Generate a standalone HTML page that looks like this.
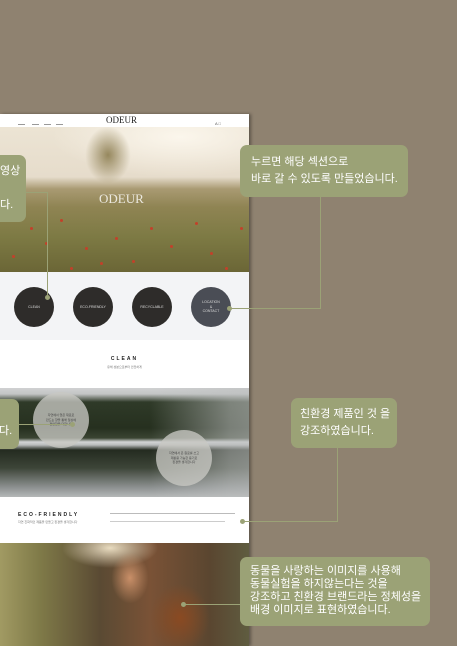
<!DOCTYPE html>
<html><head><meta charset="utf-8"><style>
*{margin:0;padding:0;box-sizing:border-box}
body{width:457px;height:646px;background:#8f8270;position:relative;overflow:hidden;font-family:"Liberation Sans","Noto Sans CJK KR",sans-serif}
.abs{position:absolute}
.mock{left:0;top:114px;width:249px;height:532px;background:#fff;box-shadow:2px 0 3px rgba(0,0,0,.35)}
.hdr{left:0;top:114px;width:249px;height:13px;background:#fff}
.nav{top:124px;height:1px;width:7px;background:#999}
.hero{left:0;top:127px;width:249px;height:145px;background:
radial-gradient(ellipse 24px 30px at 108px 28px,rgba(140,125,80,.9),rgba(140,125,80,0) 95%),
radial-gradient(ellipse 160px 50px at 180px 10px,#fbf6ec,rgba(250,245,235,0) 80%),
linear-gradient(#ece4d4 0,#e6dccb 50px,#a99a72 62px,#8f8453 80px,#7d7a44 110px,#6b6636 145px)}
.dot{width:3px;height:3px;border-radius:50%;background:#c2412a;position:absolute}
.circ{top:287px;width:40px;height:40px;border-radius:50%;background:#2e2c2a;color:#ddd;font-size:3.5px;text-align:center;display:flex;align-items:center;justify-content:center;line-height:1.3}
.lake{left:0;top:388px;width:249px;height:109px;background:
linear-gradient(90deg,rgba(0,0,0,0) 0,rgba(0,0,0,0) 150px,rgba(190,192,192,.55) 230px,rgba(190,192,192,.6) 249px),
linear-gradient(#d0d1d2 0,#c3c5c5 6px,#2f3a28 14px,#26301f 40px,#3a4432 50px,#d2d4d5 54px,#b9bcbc 57px,#242b20 62px,#3d4538 80px,#8f9393 100px,#b5b8b8 109px)}
.lc{width:56px;height:56px;border-radius:50%;background:rgba(200,200,195,.78);font-size:3px;color:#444;display:flex;align-items:center;justify-content:center;text-align:center;line-height:1.5}
.photo{left:0;top:543px;width:249px;height:103px;background:
radial-gradient(ellipse 22px 30px at 130px 35px,#c98f68,rgba(200,140,90,0) 85%),
radial-gradient(ellipse 35px 40px at 180px 75px,#8a4a22,rgba(120,60,30,0) 85%),
radial-gradient(ellipse 60px 25px at 110px 5px,#e9dcc0,rgba(240,230,210,0) 80%),
linear-gradient(90deg,#a19a63 0,#7f7a48 40px,#5a4a33 100px,#7a5236 150px,#5a4630 210px,#5f5c40 249px)}
.bub{background:#9ba276;color:#fff;border-radius:7px;font-size:11px;line-height:17px}
.ln{background:#9ba276}
.pt{width:5px;height:5px;border-radius:50%;background:#9ba276}
</style></head><body>
<div class="abs mock"></div>
<div class="abs hdr"></div>
<div class="abs nav" style="left:18px"></div><div class="abs nav" style="left:32px"></div><div class="abs nav" style="left:44px"></div><div class="abs nav" style="left:56px"></div>
<div class="abs" style="left:106px;top:115px;font-family:'Liberation Serif',serif;font-size:9px;color:#222">ODEUR</div>
<div class="abs" style="left:215px;top:121px;font-size:4px;color:#555">A &#9633;</div>
<div class="abs hero">
<div class="dot" style="left:30px;top:100px"></div><div class="dot" style="left:70px;top:140px"></div><div class="dot" style="left:132px;top:133px"></div><div class="dot" style="left:170px;top:118px"></div><div class="dot" style="left:210px;top:125px"></div><div class="dot" style="left:240px;top:100px"></div><div class="dot" style="left:85px;top:120px"></div><div class="dot" style="left:12px;top:128px"></div><div class="dot" style="left:195px;top:95px"></div><div class="dot" style="left:60px;top:92px"></div><div class="dot" style="left:150px;top:100px"></div><div class="dot" style="left:100px;top:135px"></div><div class="dot" style="left:45px;top:115px"></div><div class="dot" style="left:225px;top:140px"></div><div class="dot" style="left:115px;top:110px"></div>
</div>
<div class="abs" style="left:99px;top:191px;font-family:'Liberation Serif',serif;font-size:13px;color:rgba(255,255,255,.8)">ODEUR</div>
<div class="abs" style="left:0;top:272px;width:249px;height:68px;background:#f3f4f6"></div>
<div class="abs circ" style="left:14px">CLEAN</div>
<div class="abs circ" style="left:73px">ECO-FRIENDLY</div>
<div class="abs circ" style="left:132px">RECYCLABLE</div>
<div class="abs circ" style="left:191px;background:#4a4d55">LOCATION<br>&amp;<br>CONTACT</div>
<div class="abs" style="left:0;top:356px;width:249px;text-align:center;font-size:5px;font-weight:bold;letter-spacing:2px;color:#222">CLEAN</div>
<div class="abs" style="left:0;top:365px;width:249px;text-align:center;font-size:3px;color:#777">유해 성분으로부터 안전하게</div>
<div class="abs lake"></div>
<div class="abs lc" style="left:33px;top:392px">자연에서 얻은 재료로<br>만드는 향을 통해 일상에<br>편안함을 더합니다</div>
<div class="abs lc" style="left:156px;top:430px">자연에서 온 원료를 쓰고<br>재활용 가능한 용기로<br>환경을 생각합니다</div>
<div class="abs" style="left:18px;top:512px;font-size:5px;font-weight:bold;letter-spacing:2px;color:#222">ECO-FRIENDLY</div>
<div class="abs" style="left:18px;top:520px;font-size:3px;color:#777">자연 친화적인 제품을 만들고 환경을 생각합니다</div>
<div class="abs" style="left:110px;top:513px;width:125px;height:1px;background:#bbb"></div>
<div class="abs" style="left:110px;top:521px;width:115px;height:1px;background:#ccc"></div>
<div class="abs photo"></div>
<div class="abs bub" style="left:-10px;top:155px;width:36px;height:67px;padding:8px 0 0 10px">영상<br><br>다.</div>
<div class="abs ln" style="left:26px;top:192px;width:22px;height:1px"></div>
<div class="abs ln" style="left:47px;top:192px;width:1px;height:105px"></div>
<div class="abs pt" style="left:45px;top:295px"></div>
<div class="abs bub" style="left:240px;top:145px;width:168px;height:52px;padding:9px 0 0 11px">누르면 해당 섹션으로<br>바로 갈 수 있도록 만들었습니다.</div>
<div class="abs ln" style="left:320px;top:197px;width:1px;height:112px"></div>
<div class="abs ln" style="left:230px;top:308px;width:91px;height:1px"></div>
<div class="abs pt" style="left:227px;top:306px"></div>
<div class="abs bub" style="left:291px;top:398px;width:106px;height:50px;padding:8px 0 0 9px">친환경 제품인 것 을<br>강조하였습니다.</div>
<div class="abs ln" style="left:337px;top:448px;width:1px;height:74px"></div>
<div class="abs ln" style="left:242px;top:521px;width:96px;height:1px"></div>
<div class="abs pt" style="left:240px;top:519px"></div>
<div class="abs bub" style="left:-10px;top:399px;width:29px;height:50px;padding:24px 0 0 9px">다.</div>
<div class="abs ln" style="left:19px;top:424px;width:53px;height:1px"></div>
<div class="abs pt" style="left:70px;top:422px"></div>
<div class="abs bub" style="left:240px;top:557px;width:190px;height:69px;padding:8px 0 0 10px;line-height:13px">동물을 사랑하는 이미지를 사용해<br>동물실험을 하지않는다는 것을<br>강조하고 친환경 브랜드라는 정체성을<br>배경 이미지로 표현하였습니다.</div>
<div class="abs ln" style="left:184px;top:604px;width:56px;height:1px"></div>
<div class="abs pt" style="left:181px;top:602px"></div>
</body></html>
